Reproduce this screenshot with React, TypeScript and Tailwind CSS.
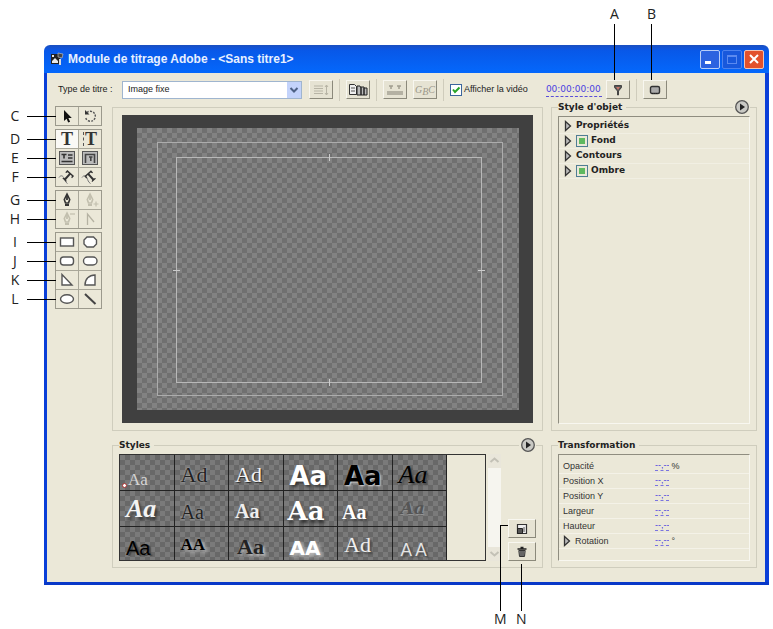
import { Fragment, ReactNode, useState } from "react";

interface ICallout {
  letter: string;
}

interface ITool {
  name: string;
  icon: ReactNode;
  active?: boolean;
  disabled?: boolean;
}

interface IToolRow {
  letter: string;
  tools: ITool[];
}

const shape = { fill: "#fff", stroke: "#555", strokeWidth: 1.4 };

function Icon(props: { children: ReactNode }) {
  return (
    <svg viewBox="0 0 22 18" className="h-[18px] w-[22px]">
      {props.children}
    </svg>
  );
}

function PathTypeIcon(props: { flip?: boolean }) {
  return (
    <Icon>
      <path
        d="M3 9.500c2-3 4-1.500 5 .5s1 4 3.500 5.500"
        fill="none"
        stroke="#777"
      />
      <g transform={props.flip ? "rotate(-42 12 9)" : "rotate(42 12 8)"}>
        <path
          d="M7.500 4h9v3h-1l-.6-1.600H13V12l1.500.7v.8h-5v-.8L11 12V5.400H9.100L8.500 7h-1z"
          fill="#333"
        />
      </g>
    </Icon>
  );
}

function PenIcon(props: { color: string; sign?: string }) {
  return (
    <Icon>
      <path
        d="M11 3 8.300 8.500l1.200 3.500h3l1.200-3.500z"
        fill="none"
        stroke={props.color}
        strokeWidth="1.600"
      />
      <path d="M11 4v5M9 14h4" stroke={props.color} strokeWidth="1.800" />
      {props.sign && (
        <path d={props.sign} stroke={props.color} strokeWidth="1.200" />
      )}
    </Icon>
  );
}

const toolGroups: IToolRow[][] = [
  [
    {
      letter: "C",
      tools: [
        {
          name: "Sélection",
          icon: (
            <Icon>
              <path
                d="M8 3v11l2.600-2.300 1.600 3.800 1.900-.8-1.700-3.700h3.400z"
                fill="#111"
              />
            </Icon>
          ),
        },
        {
          name: "Rotation",
          icon: (
            <Icon>
              <path
                d="M8 5.500a5 5 0 1 1-1.500 5"
                fill="none"
                stroke="#555"
                strokeWidth="1.400"
                strokeDasharray="2 1.200"
              />
              <path d="M6 3v4.500h4.500z" fill="#333" />
            </Icon>
          ),
        },
      ],
    },
  ],
  [
    {
      letter: "D",
      tools: [
        {
          name: "Texte",
          active: true,
          icon: (
            <span className="font-['Liberation_Serif',serif] text-[18px] leading-[18px] font-bold text-[#333]">
              T
            </span>
          ),
        },
        {
          name: "Texte vertical",
          icon: (
            <span className="flex font-['Liberation_Serif',serif] text-[18px] leading-[18px] font-bold text-[#333]">
              <span className="my-0.5 w-0.5 border-l border-dashed border-[#555]" />
              T
            </span>
          ),
        },
      ],
    },
    {
      letter: "E",
      tools: [
        {
          name: "Zone de texte",
          icon: (
            <Icon>
              <rect x="3.500" y="2.500" width="15" height="13" fill="#bbb" stroke="#555" />
              <path d="M5.500 5.500h5M8 5.500v4M12 6h4.500M12 9h4.500M5.500 12.500h11" stroke="#333" strokeWidth="1.600" />
            </Icon>
          ),
        },
        {
          name: "Zone de texte verticale",
          icon: (
            <Icon>
              <rect x="3.500" y="2.500" width="15" height="13" fill="#bbb" stroke="#555" />
              <path d="M6.500 14V5.500h9V14M10 8h3.500M11.800 8v4" fill="none" stroke="#444" strokeWidth="1.600" />
            </Icon>
          ),
        },
      ],
    },
    {
      letter: "F",
      tools: [
        { name: "Texte curviligne", icon: <PathTypeIcon /> },
        { name: "Texte curviligne vertical", icon: <PathTypeIcon flip /> },
      ],
    },
  ],
  [
    {
      letter: "G",
      tools: [
        { name: "Plume", icon: <PenIcon color="#333" /> },
        {
          name: "Ajouter un point",
          disabled: true,
          icon: <PenIcon color="#c2bfae" sign="M14.500 13h5M17 10.500v5" />,
        },
      ],
    },
    {
      letter: "H",
      tools: [
        {
          name: "Supprimer un point",
          disabled: true,
          icon: <PenIcon color="#c2bfae" sign="M14 4h5" />,
        },
        {
          name: "Conversion de point",
          disabled: true,
          icon: (
            <Icon>
              <path d="M8.500 15V4l6.500 8" fill="none" stroke="#b5b2a2" strokeWidth="1.300" />
            </Icon>
          ),
        },
      ],
    },
  ],
  [
    {
      letter: "I",
      tools: [
        { name: "Rectangle", icon: <Icon><rect x="4.500" y="5" width="13" height="8" {...shape} /></Icon> },
        { name: "Rectangle écrêté", icon: <Icon><path d="M8 4h6.500l3 3v4l-3 3H8l-3-3V7z" {...shape} /></Icon> },
      ],
    },
    {
      letter: "J",
      tools: [
        { name: "Rectangle à coins arrondis", icon: <Icon><rect x="4.500" y="5" width="13" height="8" rx="3" {...shape} /></Icon> },
        { name: "Rectangle arrondi", icon: <Icon><rect x="4.500" y="5" width="13.500" height="8" rx="4" {...shape} /></Icon> },
      ],
    },
    {
      letter: "K",
      tools: [
        { name: "Triangle", icon: <Icon><path d="M6 3.500v10.500h10z" {...shape} /></Icon> },
        { name: "Arc", icon: <Icon><path d="M6 14c0-6 4-10 10-10v10z" {...shape} /></Icon> },
      ],
    },
    {
      letter: "L",
      tools: [
        { name: "Ellipse", icon: <Icon><ellipse cx="11" cy="9" rx="6.500" ry="4.300" {...shape} /></Icon> },
        { name: "Trait", icon: <Icon><path d="M6 4l10.500 10" stroke="#444" strokeWidth="2" /></Icon> },
      ],
    },
  ],
];

const styleSamples = [
  { text: "Aa", look: "items-end pb-0.5 pl-2 font-['Liberation_Serif',serif] text-[17px] text-[#d5d5d5]" },
  { text: "Ad", look: "items-center pt-1 pl-1.5 font-['Liberation_Serif',serif] text-[22px] text-[#222] text-shadow-[0_0_2px_#ccc]" },
  { text: "Ad", look: "items-center pt-1 pl-1.5 font-['Liberation_Serif',serif] text-[22px] text-[#f3f3f3] text-shadow-[1px_1px_1px_#222]" },
  { text: "Aa", look: "items-center pt-1.5 pl-1.5 font-['DejaVu_Sans',sans-serif] text-[26px] font-bold text-white text-shadow-[2px_2px_3px_#333]" },
  { text: "Aa", look: "items-center pt-1.5 pl-1.5 font-['DejaVu_Sans',sans-serif] text-[26px] font-bold text-black text-shadow-[1px_1px_2px_#ddd]" },
  { text: "Aa", look: "items-center pt-1 pl-1.5 font-['Liberation_Serif',serif] text-[26px] italic text-black text-shadow-[2px_2px_2px_#444]" },
  { text: "Aa", look: "items-center pl-1.5 font-['Liberation_Serif',serif] text-[26px] font-bold italic text-[#f3f3f3] text-shadow-[2px_3px_3px_#333]" },
  { text: "Aa", look: "items-center pt-1.5 pl-1.5 font-['Liberation_Serif',serif] text-[20px] text-[#222] text-shadow-[0_0_2px_#bbb]" },
  { text: "Aa", look: "items-center pt-1 pl-1.5 font-['Liberation_Serif',serif] text-[20px] font-bold text-[#eee] text-shadow-[2px_2px_2px_#333]" },
  { text: "Aa", look: "items-center pt-1 pl-1 font-['DejaVu_Serif',serif] text-[26px] font-bold text-white text-shadow-[1px_3px_3px_#333]" },
  { text: "Aa", look: "items-center pt-1.5 pl-1 font-['Liberation_Serif',serif] text-[20px] font-bold text-white text-shadow-[2px_2px_2px_#444]" },
  { text: "Aa", look: "items-center pl-2 font-['DejaVu_Serif',serif] text-[17px] font-bold italic text-[#555] text-shadow-[1px_1px_1px_#999]" },
  { text: "Aa", look: "items-end pb-1 pl-1.5 font-['Liberation_Sans',sans-serif] text-[20px] text-black text-shadow-[2px_1px_1px_#444]" },
  { text: "AA", look: "items-center pl-1.5 font-['Liberation_Serif',serif] text-[17px] font-bold text-black text-shadow-[2px_2px_4px_#ddd]" },
  { text: "Aa", look: "items-end pb-1 pl-2 font-['Liberation_Serif',serif] text-[22px] font-bold text-[#222] text-shadow-[2px_2px_3px_#ccc]" },
  { text: "AA", look: "items-end pb-1 pl-1.5 font-['DejaVu_Sans',sans-serif] text-[20px] font-bold text-white text-shadow-[2px_2px_4px_#ccc]" },
  { text: "Ad", look: "items-center pl-1.5 font-['Liberation_Serif',serif] text-[22px] text-[#eee] text-shadow-[2px_2px_2px_#444]" },
  { text: "A A", look: "items-end pb-1 pl-2 font-['Lato',sans-serif] text-[17px] text-[#e5e5e5] text-shadow-[2px_2px_2px_#444]" },
];

const objectStyles = [
  { name: "Propriétés", checkable: false },
  { name: "Fond", checkable: true },
  { name: "Contours", checkable: false },
  { name: "Ombre", checkable: true },
];

const transforms = [
  { name: "Opacité", unit: "%" },
  { name: "Position X", unit: "" },
  { name: "Position Y", unit: "" },
  { name: "Largeur", unit: "" },
  { name: "Hauteur", unit: "" },
  { name: "Rotation", unit: "°", expandable: true },
];

// Letter and leader line to the left of a tool row
function SideCallout(props: ICallout) {
  return (
    <div className="absolute top-1/2 right-full flex w-[49px] -translate-y-1/2 items-center">
      <span className="w-4 text-center font-['Open_Sans',sans-serif] text-[14px] leading-4 text-[#222]">
        {props.letter}
      </span>
      <span className="ml-1 h-px flex-1 bg-black" />
    </div>
  );
}

// Letter and leader line above a toolbar button
function TopCallout(props: ICallout) {
  return (
    <span className="absolute bottom-full left-1 flex flex-col items-center font-['Open_Sans',sans-serif] text-[14px] leading-4 text-[#222]">
      {props.letter}
      <span className="mt-0.5 h-14 w-px bg-black" />
    </span>
  );
}

function ToolbarButton(props: {
  label: string;
  disabled?: boolean;
  children: ReactNode;
}) {
  return (
    <button
      aria-label={props.label}
      disabled={props.disabled}
      className="flex h-[19px] w-6 shrink-0 items-center justify-center border border-t-[#f8f7f0] border-r-[#8b897b] border-b-[#8b897b] border-l-[#f8f7f0] bg-[#e6e3d3]"
    >
      {props.children}
    </button>
  );
}

function Separator() {
  return <div className="h-[22px] w-px shrink-0 bg-[#cfccbc]" />;
}

function MenuButton(props: { label: string }) {
  return (
    <button aria-label={props.label} className="bg-[#ebe8d8] pl-px">
      <svg viewBox="0 0 16 16" className="size-4">
        <circle cx="8" cy="8" r="6.300" fill="#c9c9c4" stroke="#555" strokeWidth="1.300" />
        <path d="M6 4.500v7L11 8z" fill="#222" />
      </svg>
    </button>
  );
}

function Panel(props: { title: string; menu?: boolean; children: ReactNode }) {
  return (
    <section className="flex flex-col border border-[#cfcdbd] px-1.5 pb-1.5">
      <header className="-mt-[9px] mb-px flex h-4 items-center justify-between">
        <h2 className="bg-[#ebe8d8] pr-1 font-['DejaVu_Sans',sans-serif] text-[9px] leading-4 font-bold text-[#222]">
          {props.title}
        </h2>
        {props.menu && <MenuButton label={`Menu ${props.title}`} />}
      </header>
      {props.children}
    </section>
  );
}

function ExpandButton(props: { label: string }) {
  return (
    <button aria-label={`Développer ${props.label}`} className="shrink-0">
      <svg viewBox="0 0 8 12" className="h-3 w-2">
        <path d="M1.500 1.500v9L6.500 6z" fill="#bbb" stroke="#333" strokeWidth="1.300" />
      </svg>
    </button>
  );
}

function TitleBar() {
  return (
    <header className="flex h-7 items-center gap-1 rounded-t-md bg-linear-to-b from-[#1a4fc0] via-[#0858e8] via-20% to-[#0468fc] pr-[5px] pl-1.5">
      <svg viewBox="0 0 14 14" className="size-3.5">
        <path d="M1 2h9v10H1z" fill="#222" />
        <path d="M2 3h2v2H2zM2 9l3-3 3 3v2H2z" fill="#e8e8e8" />
        <path d="M8 1l5 1-1 4-4-1z" fill="#444" stroke="#ccc" strokeWidth=".600" />
        <path d="M9 7v6h2V7z" fill="#ddd" />
      </svg>
      <h1 className="flex-1 text-[12px] font-bold text-[#e8f0ff]">
        Module de titrage Adobe - &lt;Sans titre1&gt;
      </h1>
      <div className="flex gap-0.5">
        <button aria-label="Réduire" className="flex h-[19px] w-5 items-end rounded-xs border border-[#b9cdf8] bg-[#2c62e0] p-1">
          <span className="h-[3px] w-1.5 bg-white" />
        </button>
        <button aria-label="Agrandir" disabled className="flex h-[19px] w-5 items-center justify-center rounded-xs border border-[#4c82ee] bg-[#1858dc]">
          <span className="h-[9px] w-2.5 border border-t-2 border-[#5b8af0]" />
        </button>
        <button aria-label="Fermer" className="flex h-[19px] w-5 items-center justify-center rounded-xs border border-[#f2c4b4] bg-[#e2512c]">
          <svg viewBox="0 0 12 12" className="size-3">
            <path d="M2 2l8 8M10 2l-8 8" stroke="#fff" strokeWidth="2" />
          </svg>
        </button>
      </div>
    </header>
  );
}

function Toolbar() {
  const [showVideo, setShowVideo] = useState(true);

  return (
    <div className="flex h-[19px] items-center gap-1.5 text-[9px] text-[#222]">
      <label htmlFor="title-type" className="w-[61px] shrink-0 pl-[3px] whitespace-nowrap">
        Type de titre :
      </label>
      <div className="relative mr-px h-[18px] w-[180px] shrink-0">
        <select
          id="title-type"
          className="h-full w-full appearance-none border border-[#9fb5cf] bg-white pl-[5px]"
        >
          <option>Image fixe</option>
          <option>Défilement vertical</option>
        </select>
        <svg viewBox="0 0 14 16" className="pointer-events-none absolute top-px right-px h-4 w-3.5 bg-[#c3d3fb]">
          <path d="M3.500 6L7 9.500 10.500 6" fill="none" stroke="#4d6185" strokeWidth="2" />
        </svg>
      </div>
      <ToolbarButton label="Options de défilement" disabled>
        <svg viewBox="0 0 18 14" className="h-3.5 w-[18px]">
          <path d="M2 3h9M2 5.500h9M2 8h9M2 10.500h9M14.500 2v10M13 4l1.500-2L16 4M13 10l1.500 2 1.500-2" fill="none" stroke="#b7b4a5" />
        </svg>
      </ToolbarButton>
      <Separator />
      <ToolbarButton label="Modèles">
        <svg viewBox="0 0 20 14" className="h-3.5 w-5">
          <path d="M1.500 1.500h5l2 2v8h-7z" fill="#eee" stroke="#333" />
          <path d="M3 5h4M3 8h4" stroke="#555" />
          <path d="M9 3h3l1 2v7H9zM13 4h3v8h-3zM16 5h3v7h-3z" fill="#bbb" stroke="#222" />
        </svg>
      </ToolbarButton>
      <Separator />
      <ToolbarButton label="Taquets" disabled>
        <svg viewBox="0 0 20 14" className="h-3.5 w-5">
          <path d="M4 3h4M12 3h4M6 3v3M14 3v3" stroke="#a19e90" strokeWidth="1.500" />
          <path d="M2 8h16v4H2z" fill="#b4b1a3" />
        </svg>
      </ToolbarButton>
      <ToolbarButton label="Police" disabled>
        <span className="font-['Liberation_Serif',serif] text-[10px] leading-3 text-[#9b988a] italic">
          G<sub className="text-[10px]">B</sub>C
        </span>
      </ToolbarButton>
      <Separator />
      <label className="flex shrink-0 items-center gap-0.5 whitespace-nowrap">
        <span className="grid size-3">
          <input
            type="checkbox"
            checked={showVideo}
            onChange={(e) => setShowVideo(e.target.checked)}
            className="peer col-start-1 row-start-1 size-3 appearance-none border border-[#3c669c] bg-white"
          />
          <svg viewBox="0 0 12 12" className="pointer-events-none invisible col-start-1 row-start-1 size-3 peer-checked:visible">
            <path d="M3 5.500L5 8l4.500-4.500" fill="none" stroke="#27a427" strokeWidth="2" />
          </svg>
        </span>
        Afficher la vidéo
      </label>
      <input
        aria-label="Code temporel"
        defaultValue="00:00:00:00"
        className="ml-3 h-3.5 w-14 shrink-0 border-b border-dashed border-[#5a4fd8] bg-transparent font-['DejaVu_Sans',sans-serif] text-[9px] text-[#4a3fe0]"
      />
      <div className="relative -ml-0.5">
        <ToolbarButton label="Synchroniser">
          <svg viewBox="0 0 10 12" className="h-3 w-2.5">
            <path d="M1.500 1.500h7v2L5.500 7v4h-1V7l-3-3.500z" fill="#555" stroke="#444" />
            <path d="M3 3h4L5 6z" fill="#c9766a" />
          </svg>
        </ToolbarButton>
        <TopCallout letter="A" />
      </div>
      <Separator />
      <div className="relative">
        <ToolbarButton label="Envoyer vers le moniteur externe">
          <svg viewBox="0 0 12 10" className="h-2.5 w-3">
            <rect x="1.500" y="1.500" width="9" height="7" rx="1.500" fill="#aaa" stroke="#333" strokeWidth="1.400" />
            <path d="M3 8.500h6" stroke="#222" strokeDasharray="1 1" />
          </svg>
        </ToolbarButton>
        <TopCallout letter="B" />
      </div>
    </div>
  );
}

function Toolbox() {
  return (
    <nav aria-label="Outils" className="-mt-px flex w-[47px] flex-col gap-[3px]">
      {toolGroups.map((group) => (
        <div
          key={group[0].letter}
          className="flex flex-col gap-px border border-[#9b998c] bg-[#a9a799]"
        >
          {group.map((row) => (
            <div key={row.letter} className="relative flex gap-px">
              {row.tools.map((tool) => (
                <button
                  key={tool.name}
                  aria-label={tool.name}
                  disabled={tool.disabled}
                  className={`flex h-[18px] flex-1 items-center justify-center overflow-hidden ${
                    tool.active ? "bg-[#faf9f5]" : "bg-[#ebe8d8]"
                  }`}
                >
                  {tool.icon}
                </button>
              ))}
              <SideCallout letter={row.letter} />
            </div>
          ))}
        </div>
      ))}
    </nav>
  );
}

function Preview() {
  return (
    <section className="border border-[#cfcdbd] px-[9px] py-[7px]">
      <div className="flex aspect-4/3 bg-[#404040] py-[13px] pr-3.5 pl-[15px]">
        <div className="flex flex-1 bg-[conic-gradient(#707070_25%,#828282_0_50%,#707070_0_75%,#828282_0)] bg-size-[10px_10px] py-3.5 pr-4 pl-5">
          <div className="flex flex-1 border border-[#acacac] pt-3.5 pr-5 pb-3 pl-[18px]">
            <div className="relative flex-1 border border-[#b8b8b8]">
              <span className="absolute -top-1 left-1/2 h-[7px] w-px bg-[#ccc]" />
              <span className="absolute -bottom-1 left-1/2 h-[7px] w-px bg-[#ccc]" />
              <span className="absolute top-1/2 -left-1 h-px w-[7px] bg-[#ccc]" />
              <span className="absolute top-1/2 -right-1 h-px w-[7px] bg-[#ccc]" />
            </div>
          </div>
        </div>
      </div>
    </section>
  );
}

function ObjectStyle() {
  return (
    <Panel title="Style d'objet" menu>
      <div className="flex-1 border border-t-[#8f8d80] border-r-[#f8f7f0] border-b-[#f8f7f0] border-l-[#8f8d80] pt-0.5 font-['DejaVu_Sans',sans-serif] text-[9px] font-bold text-[#222]">
        {objectStyles.map((item) => (
          <div
            key={item.name}
            className="flex h-[15px] items-center gap-1 border-b border-[#f1efe3] pl-[5px]"
          >
            <ExpandButton label={item.name} />
            {item.checkable ? (
              <label className="flex items-center gap-[3px]">
                <input
                  type="checkbox"
                  defaultChecked
                  className="size-3 appearance-none border border-[#4f7d94] bg-white p-0.5 checked:bg-[#5fb95f] checked:bg-clip-content"
                />
                {item.name}
              </label>
            ) : (
              <span>{item.name}</span>
            )}
          </div>
        ))}
      </div>
    </Panel>
  );
}

function Styles() {
  return (
    <Panel title="Styles" menu>
      <div className="flex gap-0.5">
        <div className="flex h-[107px] min-w-0 flex-1 overflow-hidden border border-[#333]">
          <div className="grid flex-1 auto-rows-[35px] grid-cols-6 gap-px bg-[#222] pr-px">
            {styleSamples.map((sample, i) => (
              <button
                key={i}
                className={`relative flex min-w-0 overflow-hidden bg-[conic-gradient(#686868_25%,#7a7a7a_0_50%,#686868_0_75%,#7a7a7a_0)] bg-size-[10px_10px] leading-none ${sample.look}`}
              >
                {sample.text}
                {i === 0 && (
                  <span className="absolute bottom-0.5 left-0.5 size-[5px] rounded-full border border-[#a33] bg-white" />
                )}
              </button>
            ))}
          </div>
          <div className="w-[38px] shrink-0" />
        </div>
        <div className="flex w-[13px] flex-col justify-between bg-[#f6f5ef]">
          {["M2.500 8L6.500 4.500 10.500 8", "M2.500 5L6.500 8.500 10.500 5"].map((d, i) => (
            <button
              key={d}
              aria-label={i === 0 ? "Défiler vers le haut" : "Défiler vers le bas"}
              className="bg-[#e9e6da]"
            >
              <svg viewBox="0 0 13 14" className="h-3.5 w-[13px]">
                <path d={d} fill="none" stroke="#c3c1b6" strokeWidth="2" />
              </svg>
            </button>
          ))}
        </div>
        <div className="ml-[5px] flex w-7 flex-col justify-end gap-1">
          <div className="relative flex">
            <button
              aria-label="Nouveau style"
              className="flex h-[19px] flex-1 items-center justify-center border border-t-[#f8f7f0] border-r-[#8b897b] border-b-[#8b897b] border-l-[#f8f7f0] bg-[#e6e3d3]"
            >
              <svg viewBox="0 0 12 12" className="size-3">
                <path d="M1.500 1.500h9v9h-9z" fill="#eee" stroke="#333" strokeWidth="1.200" />
                <path d="M1.500 5.500h5v5h-5z" fill="#555" stroke="#222" />
                <path d="M8 4v5" stroke="#555" />
              </svg>
            </button>
            <span className="absolute top-1.5 right-full flex flex-col items-start">
              <span className="h-[86px] w-2 border-t border-l border-black" />
              <span className="-ml-1.5 font-['Open_Sans',sans-serif] text-[14px] leading-4 text-[#222]">
                M
              </span>
            </span>
          </div>
          <div className="relative flex">
            <button
              aria-label="Supprimer le style"
              className="flex h-[19px] flex-1 items-center justify-center border border-t-[#f8f7f0] border-r-[#8b897b] border-b-[#8b897b] border-l-[#f8f7f0] bg-[#e6e3d3]"
            >
              <svg viewBox="0 0 12 12" className="size-3">
                <path d="M1.500 3h9M4.500 1.500h3" stroke="#222" strokeWidth="1.500" />
                <path d="M2.800 4.500h6.400l-.7 6H3.500z" fill="#999" stroke="#333" />
                <path d="M5 5v5M7 5v5" stroke="#333" />
              </svg>
            </button>
            <span className="absolute top-full left-2 flex flex-col items-center pt-[3px] font-['Open_Sans',sans-serif] text-[14px] leading-4 text-[#222]">
              <span className="h-[47px] w-px bg-black" />
              N
            </span>
          </div>
        </div>
      </div>
    </Panel>
  );
}

function Transformation() {
  return (
    <Panel title="Transformation">
      <div className="flex-1 border border-t-[#8f8d80] border-r-[#f8f7f0] border-b-[#f8f7f0] border-l-[#8f8d80] pt-1 text-[9px] text-[#333]">
        {transforms.map((item) => (
          <div
            key={item.name}
            className="flex h-[15px] items-center border-b border-[#f4f2e8] pl-1"
          >
            <div className="flex w-[92px] items-center gap-1">
              {item.expandable && <ExpandButton label={item.name} />}
              <label htmlFor={item.name}>{item.name}</label>
            </div>
            <input
              id={item.name}
              defaultValue="--,--"
              className="h-2.5 w-3.5 border-b border-dashed border-[#7b74e0] bg-transparent text-[9px] text-[#4a3fe0]"
            />
            {item.unit && <Fragment>&nbsp;{item.unit}</Fragment>}
          </div>
        ))}
      </div>
    </Panel>
  );
}

export default function App() {
  return (
    <main className="overflow-hidden bg-white pt-[45px] pr-1 pb-[45px] pl-11 font-['Liberation_Sans',Arial,sans-serif]">
      <div className="rounded-t-lg border-b-[3px] border-[#0838c8]">
        <TitleBar />
        <div className="border-r-4 border-l-[3px] border-[#0a3fd8] bg-[#ebe8d8] px-2 pt-[7px] pb-3.5">
          <Toolbar />
          <div className="mt-2 grid grid-cols-[49px_minmax(0,1fr)_206px] gap-x-2 gap-y-3.5">
            <Toolbox />
            <Preview />
            <ObjectStyle />
            <div />
            <Styles />
            <Transformation />
          </div>
        </div>
      </div>
    </main>
  );
}
